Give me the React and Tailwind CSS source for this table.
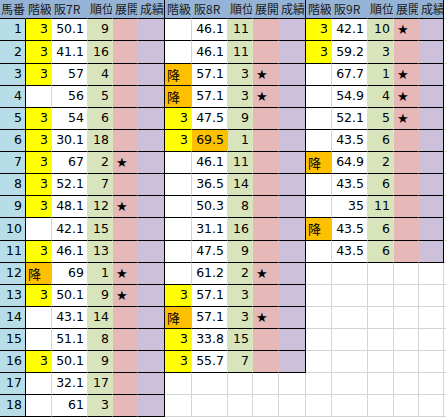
import React from 'react';

// [階級, タイム, 順位, 展開★, タイムを橙にするか]
const blocks = [
  {
    race: '阪7R',
    rows: [
      ['3', '50.1', '9'],
      ['3', '41.1', '16'],
      ['3', '57', '4'],
      ['', '56', '5'],
      ['3', '54', '6'],
      ['3', '30.1', '18'],
      ['3', '67', '2', true],
      ['3', '52.1', '7'],
      ['3', '48.1', '12', true],
      ['', '42.1', '15'],
      ['3', '46.1', '13'],
      ['降', '69', '1', true],
      ['3', '50.1', '9', true],
      ['', '43.1', '14'],
      ['', '51.1', '8'],
      ['3', '50.1', '9'],
      ['', '32.1', '17'],
      ['', '61', '3'],
    ],
  },
  {
    race: '阪8R',
    rows: [
      ['', '46.1', '11'],
      ['', '46.1', '11'],
      ['降', '57.1', '3', true],
      ['降', '57.1', '3', true],
      ['3', '47.5', '9'],
      ['3', '69.5', '1', false, true],
      ['', '46.1', '11'],
      ['', '36.5', '14'],
      ['', '50.3', '8'],
      ['', '31.1', '16'],
      ['', '47.5', '9'],
      ['', '61.2', '2', true],
      ['3', '57.1', '3'],
      ['降', '57.1', '3', true],
      ['3', '33.8', '15'],
      ['3', '55.7', '7'],
    ],
  },
  {
    race: '阪9R',
    rows: [
      ['3', '42.1', '10', true],
      ['3', '59.2', '3'],
      ['', '67.7', '1', true],
      ['', '54.9', '4', true],
      ['', '52.1', '5', true],
      ['', '43.5', '6'],
      ['降', '64.9', '2'],
      ['', '43.5', '6'],
      ['', '35', '11'],
      ['降', '43.5', '6'],
      ['', '43.5', '6'],
    ],
  },
];

const widths = [
  ['w-[26px]', 'w-[36px]', 'w-[25px]', 'w-[25px]', 'w-[27px]'],
  ['w-[27px]', 'w-[36px]', 'w-[25px]', 'w-[26px]', 'w-[27px]'],
  ['w-[26px]', 'w-[36px]', 'w-[26px]', 'w-[25px]', 'w-[25px]'],
];

const WHITE = '#ffffff';
const GRID = '#d4d4d4';
const BLACK = '#000000';
const YELLOW = '#ffff00';
const ORANGE = '#ffc000';
const GREEN = '#d8e4bc';
const PINK = '#e6b8b7';
const PURPLE = '#ccc0da';

const num = "font-['DejaVu_Sans',sans-serif] text-[12.5px]";
const jp = "font-['Noto_Sans_CJK_JP','Noto_Sans',sans-serif]";

function Cell({ w, bg, right, bottom, align = 'right', className = '', children }) {
  return (
    <div
      className={`${w} h-full shrink-0 flex items-center overflow-hidden whitespace-nowrap border-r border-b text-black ${
        align === 'right' ? 'justify-end pr-[3px]' : 'justify-start pl-[2px]'
      } ${className}`}
      style={{ backgroundColor: bg, borderRightColor: right, borderBottomColor: bottom }}
    >
      {children}
    </div>
  );
}

function blockCells(block, bi, r) {
  const row = block.rows[r];
  const w = widths[bi];
  if (!row) {
    return w.map((cw, i) => (
      <Cell key={`${bi}-${i}`} w={cw} bg={WHITE} right={GRID} bottom={GRID} />
    ));
  }
  const [kai, time, rank, star, timeOrange] = row;
  const kaiBg = kai === '3' ? YELLOW : kai === '降' ? ORANGE : WHITE;
  const timeBg = timeOrange ? ORANGE : WHITE;
  const bgs = [kaiBg, timeBg, GREEN, PINK, PURPLE];
  const rightOf = (i) => {
    if (i === 4) return BLACK;
    if (bgs[i] !== WHITE) return bgs[i];
    if (bgs[i + 1] !== WHITE) return bgs[i + 1];
    return GRID;
  };
  return [
    <Cell
      key={`${bi}-0`}
      w={w[0]}
      bg={bgs[0]}
      right={rightOf(0)}
      bottom={BLACK}
      align={kai === '降' ? 'left' : 'right'}
      className={kai === '降' ? `${jp} text-[13px]` : num}
    >
      {kai}
    </Cell>,
    <Cell key={`${bi}-1`} w={w[1]} bg={bgs[1]} right={rightOf(1)} bottom={BLACK} className={num}>
      {time}
    </Cell>,
    <Cell key={`${bi}-2`} w={w[2]} bg={bgs[2]} right={rightOf(2)} bottom={BLACK} className={num}>
      {rank}
    </Cell>,
    <Cell
      key={`${bi}-3`}
      w={w[3]}
      bg={bgs[3]}
      right={rightOf(3)}
      bottom={BLACK}
      align="left"
      className="text-[13px] pl-[3px] font-['DejaVu_Sans',sans-serif]"
    >
      {star ? '★' : ''}
    </Cell>,
    <Cell key={`${bi}-4`} w={w[4]} bg={bgs[4]} right={rightOf(4)} bottom={BLACK} />,
  ];
}

const headerLabels = ['階級', null, '順位', '展開', '成績'];

export default function App() {
  return (
    <div className="w-[446px] h-[419px] bg-white overflow-hidden">
      {/* 見出し */}
      <div className={`flex h-[19px] ${jp} text-[12px] text-[#1a1a1a]`}>
        <div className="w-[26px] h-full shrink-0 bg-[#95b3d7] border-b border-r border-r-[#95b3d7] border-b-black pl-[1px] leading-[18px] whitespace-nowrap overflow-hidden">
          馬番
        </div>
        {blocks.map((b, bi) =>
          widths[bi].map((cw, i) => (
            <div
              key={`h-${bi}-${i}`}
              className={`${cw} h-full shrink-0 bg-[#95b3d7] border-b border-r border-b-black pl-[2px] leading-[18px] whitespace-nowrap overflow-hidden ${
                i === 4 ? 'border-r-black' : 'border-r-[#95b3d7]'
              }`}
            >
              {headerLabels[i] ?? b.race}
            </div>
          ))
        )}
        <div className="w-[2px] h-full shrink-0 bg-white border-b border-b-[#d4d4d4]" />
      </div>

      {/* 本体 */}
      {Array.from({ length: 18 }).map((_, r) => (
        <div key={r} className={`flex ${r === 1 || r === 9 ? 'h-[23px]' : 'h-[22px]'}`}>
          <Cell w="w-[26px]" bg="#b7dee8" right={BLACK} bottom={BLACK} className={num}>
            {r + 1}
          </Cell>
          {blocks.map((b, bi) => blockCells(b, bi, r))}
          <div className="w-[2px] h-full shrink-0 bg-white border-b border-b-[#d4d4d4]" />
        </div>
      ))}
    </div>
  );
}
